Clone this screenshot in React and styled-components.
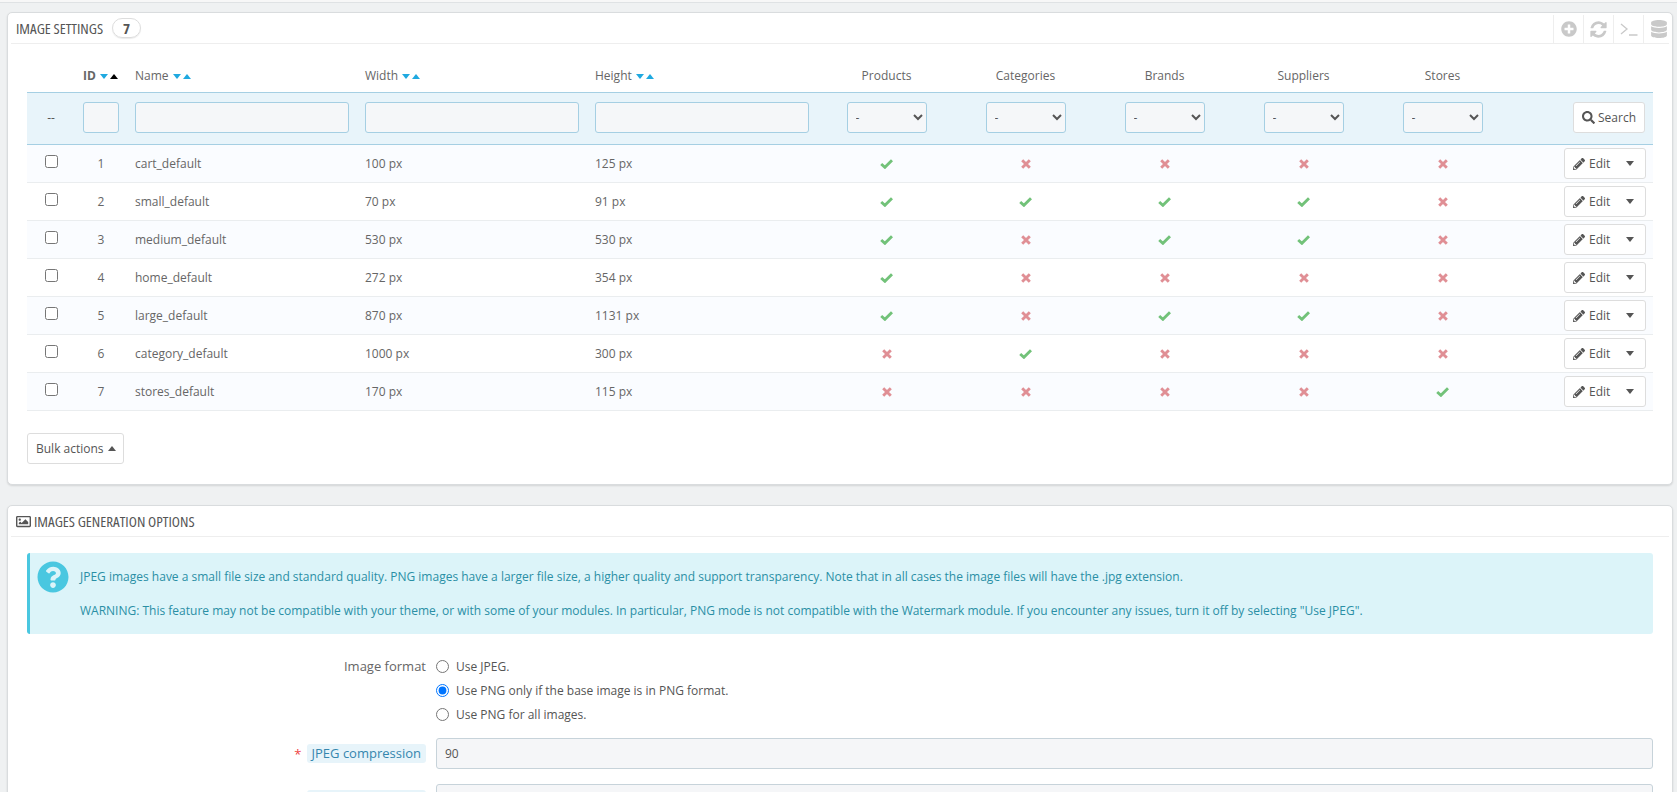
import styled, { createGlobalStyle } from "styled-components";
import { FaPencilAlt, FaSearch, FaPlusCircle, FaDatabase, FaRegImage, FaQuestionCircle } from "react-icons/fa";

const GlobalStyle = createGlobalStyle`
  html, body {
    margin: 0;
    height: 792px;
    overflow: hidden;
    background: #eff1f2;
  }
  body {
    font-family: "Open Sans", "Liberation Sans", sans-serif;
    font-size: 12px;
    color: #555;
  }
`;

const Page = styled.div`
  padding: 0 4px 0 7px;
`;

const TopEdge = styled.div`
  height: 2px;
  background: #f7f7f7;
  border-bottom: 1px solid #dfe2e4;
  margin: 0 -4px 9px -7px;
`;

const Panel = styled.section`
  background: #fff;
  border: 1px solid #d9dcde;
  border-radius: 5px;
  box-shadow: 0 1px 2px rgba(0, 0, 0, 0.12);
  padding: 0 3px;
  margin-bottom: 20px;
`;

const PanelHeader = styled.header`
  height: 30px;
  display: flex;
  align-items: center;
  border-bottom: 1px solid #eee;
  padding-left: 5px;
  font-size: 15px;
  font-stretch: 75%;
  text-transform: uppercase;
  color: #555;
  gap: 3px;
`;

const Badge = styled.span`
  box-sizing: border-box;
  border: 1px solid #ddd;
  border-radius: 10px;
  height: 20px;
  width: 29px;
  margin-left: 6px;
  display: flex;
  align-items: center;
  justify-content: center;
  font-weight: 700;
  font-size: 15px;
  box-shadow: 0 1px 1px rgba(0, 0, 0, 0.08);
`;

const Tools = styled.div`
  margin-left: auto;
  margin-right: -4px;
  display: flex;
  align-self: stretch;
`;

const Tool = styled.div`
  width: 30px;
  box-sizing: border-box;
  margin-top: 2px;
  display: flex;
  align-items: center;
  justify-content: center;
  border-left: 1px solid #eee;
  color: #c9c9c9;
  font-size: ${(p) => p.$size || 16}px;
`;

const Body = styled.div`
  padding: 0 16px;
`;

const Table = styled.table`
  width: 1626px;
  table-layout: fixed;
  border-collapse: collapse;
`;

const Th = styled.th`
  height: 33px;
  padding: 15px 8px 0;
  font-weight: ${(p) => (p.$active ? 700 : 400)};
  font-size: 12px;
  color: #666;
  text-align: ${(p) => (p.$center ? "center" : "left")};
  white-space: nowrap;
`;

const Carets = styled.span`
  display: inline-flex;
  align-items: center;
  gap: 2px;
  margin-left: 4px;
  vertical-align: 1px;
`;

const Caret = styled.i`
  display: inline-block;
  width: 0;
  height: 0;
  border-left: 4px solid transparent;
  border-right: 4px solid transparent;
  border-${(p) => (p.$up ? "bottom" : "top")}: 5px solid ${(p) => p.$color || "#1fa9e0"};
`;

const FilterRow = styled.tr`
  background: #e8f4fa;
  border-top: 1px solid #a5cfe3;
  border-bottom: 1px solid #a5cfe3;
`;

const FilterCell = styled.td`
  height: 48px;
  padding: 0 8px 3px;
  text-align: ${(p) => p.$align || "left"};
`;

const FilterInput = styled.input`
  display: block;
  box-sizing: border-box;
  width: 100%;
  height: 31px;
  background: #f5f7f9;
  border: 1px solid #a5cfe3;
  border-radius: 3px;
`;

const FilterSelect = styled.select`
  width: 80px;
  height: 31px;
  box-sizing: border-box;
  background: #f5f7f9;
  border: 1px solid #a5cfe3;
  border-radius: 3px;
  font-family: inherit;
  font-size: 12px;
  padding-left: 4px;
  color: #555;
  vertical-align: middle;
`;

const Row = styled.tr`
  background: ${(p) => (p.$odd ? "#fafcff" : "#fff")};
  border-bottom: 1px solid #eaedef;
`;

const Cell = styled.td`
  height: 37px;
  padding: 0 8px;
  text-align: ${(p) => p.$align || "left"};
  color: #666;
  font-size: 12px;
`;

const Check = styled.input`
  display: block;
  margin: -5px auto 0;
`;

const Mark = styled.svg`
  vertical-align: -1px;
  fill: none;
  stroke: ${(p) => p.$color};
  stroke-width: 2.9;
`;

const Yes = () => (
  <Mark $color="#72c279" width="13" height="10" viewBox="0 0 13 10">
    <path d="M1.2 5 L4.9 8.3 L12 1.3" />
  </Mark>
);

const No = () => (
  <Mark $color="#e08f95" width="10" height="10" viewBox="0 0 10 10">
    <path d="M1.2 1.2 L8.8 8.8 M8.8 1.2 L1.2 8.8" />
  </Mark>
);

const Button = styled.button`
  height: 31px;
  box-sizing: border-box;
  background: #fff;
  border: 1px solid #ddd;
  border-radius: 3px;
  font-family: inherit;
  font-size: 12px;
  color: #555;
  display: inline-flex;
  align-items: center;
  vertical-align: middle;
  white-space: nowrap;
  padding: 0 8px;
  gap: 3px;
`;

const EditButton = styled(Button)`
  width: 82px;
  margin-right: -1px;
  justify-content: space-between;
  padding: 0 11px 0 8px;
`;

const EditLabel = styled.span`
  display: inline-flex;
  align-items: center;
  gap: 4px;
`;

const BulkBar = styled.div`
  padding: 22px 0 20px;
`;

const BulkButton = styled(Button)`
  width: 97px;
  padding: 0 8px;
  gap: 4px;
`;

const Alert = styled.div`
  margin-top: 16px;
  height: 81px;
  box-sizing: border-box;
  background: #dcf4f9;
  border-left: 3px solid #4ac7e0;
  border-radius: 3px;
  color: #2a8fa5;
  padding: 15px 0 0 50px;
  position: relative;
  font-size: 12px;
  p {
    margin: 0;
    line-height: 17px;
  }
  p + p {
    margin-top: 17px;
  }
`;

const HelpIcon = styled(FaQuestionCircle)`
  position: absolute;
  left: 7px;
  top: 8px;
  font-size: 32px;
  color: #4ac7e0;
`;

const FormRow = styled.div`
  display: flex;
  gap: 10px;
  margin-top: ${(p) => p.$top || 0}px;
`;

const Label = styled.div`
  width: 399px;
  flex: none;
  display: flex;
  align-items: ${(p) => (p.$middle ? "center" : "flex-start")};
  justify-content: flex-end;
  gap: 5px;
  font-size: 13px;
  color: #666;
  line-height: 24px;
`;

const Hint = styled.span`
  background: #e7f4fa;
  color: #3586ae;
  border-radius: 3px;
  padding: 0 5px;
  line-height: 19px;
  font-size: 13px;
`;

const Star = styled.span`
  color: #e44;
  font-size: 13px;
`;

const Radios = styled.div`
  display: flex;
  flex-direction: column;
`;

const RadioLine = styled.label`
  height: 24px;
  display: flex;
  align-items: center;
  gap: 7px;
  color: #555;
  input {
    margin: 0;
    width: 13px;
    height: 13px;
  }
`;

const TextInput = styled.input`
  flex: 1;
  box-sizing: border-box;
  height: 31px;
  background: #f5f6f8;
  border: 1px solid #c7d3da;
  border-radius: 3px;
  padding: 0 8px;
  font-family: inherit;
  font-size: 12px;
  color: #555;
`;

const columns = [
  { id: "check", w: 48 },
  { id: "id", w: 52 },
  { id: "name", w: 230 },
  { id: "width", w: 230 },
  { id: "height", w: 230 },
  { id: "products", w: 139 },
  { id: "categories", w: 139 },
  { id: "brands", w: 139 },
  { id: "suppliers", w: 139 },
  { id: "stores", w: 139 },
  { id: "actions", w: 141 },
];

const images = [
  { id: 1, name: "cart_default", width: 100, height: 125, flags: [1, 0, 0, 0, 0] },
  { id: 2, name: "small_default", width: 70, height: 91, flags: [1, 1, 1, 1, 0] },
  { id: 3, name: "medium_default", width: 530, height: 530, flags: [1, 0, 1, 1, 0] },
  { id: 4, name: "home_default", width: 272, height: 354, flags: [1, 0, 0, 0, 0] },
  { id: 5, name: "large_default", width: 870, height: 1131, flags: [1, 0, 1, 1, 0] },
  { id: 6, name: "category_default", width: 1000, height: 300, flags: [0, 1, 0, 0, 0] },
  { id: 7, name: "stores_default", width: 170, height: 115, flags: [0, 0, 0, 0, 1] },
];

const kinds = ["Products", "Categories", "Brands", "Suppliers", "Stores"];

const SortCarets = ({ sorted }) => (
  <Carets>
    <Caret />
    <Caret $up $color={sorted ? "#000" : undefined} />
  </Carets>
);

const RefreshIcon = () => (
  <svg width="19" height="19" viewBox="0 0 1792 1792" fill="currentColor">
    <path d="M1639 1056q0 5-1 7-64 268-268 434.5t-478 166.5q-146 0-282.5-55t-243.5-157l-129 129q-19 19-45 19t-45-19-19-45v-448q0-26 19-45t45-19h448q26 0 45 19t19 45-19 45l-137 137q71 66 161 102t187 36q134 0 250-65t186-179q11-17 53-117 8-23 30-23h192q13 0 22.5 9.5t9.5 22.5zm25-800v448q0 26-19 45t-45 19h-448q-26 0-45-19t-19-45 19-45l138-138q-148-137-349-137-134 0-250 65t-186 179q-11 17-53 117-8 23-30 23h-199q-13 0-22.5-9.5t-9.5-22.5v-7q65-268 270-434.5t480-166.5q146 0 284 55.5t245 156.5l130-129q19-19 45-19t45 19 19 45z" />
  </svg>
);

const PromptIcon = () => (
  <svg width="18" height="14" viewBox="0 0 18 14" fill="none" stroke="currentColor" strokeWidth="1.3">
    <path d="M1 2 L7 7 L1 12 M9 13 H17.5" />
  </svg>
);

const App = () => {
  return (
    <Page>
      <GlobalStyle />
      <TopEdge />
      <Panel>
        <PanelHeader>
          Image settings <Badge>7</Badge>
          <Tools>
            <Tool>
              <FaPlusCircle />
            </Tool>
            <Tool>
              <RefreshIcon />
            </Tool>
            <Tool>
              <PromptIcon />
            </Tool>
            <Tool $size={18}>
              <FaDatabase />
            </Tool>
          </Tools>
        </PanelHeader>
        <Body>
          <Table>
            <colgroup>
              {columns.map((c) => (
                <col key={c.id} style={{ width: c.w }} />
              ))}
            </colgroup>
            <thead>
              <tr>
                <Th />
                <Th $active>
                  ID
                  <SortCarets sorted />
                </Th>
                <Th>
                  Name
                  <SortCarets />
                </Th>
                <Th>
                  Width
                  <SortCarets />
                </Th>
                <Th>
                  Height
                  <SortCarets />
                </Th>
                {kinds.map((k) => (
                  <Th key={k} $center>
                    {k}
                  </Th>
                ))}
                <Th />
              </tr>
              <FilterRow>
                <FilterCell $align="center">--</FilterCell>
                <FilterCell>
                  <FilterInput />
                </FilterCell>
                <FilterCell>
                  <FilterInput />
                </FilterCell>
                <FilterCell>
                  <FilterInput />
                </FilterCell>
                <FilterCell>
                  <FilterInput />
                </FilterCell>
                {kinds.map((k) => (
                  <FilterCell key={k} $align="center">
                    <FilterSelect defaultValue="-">
                      <option>-</option>
                    </FilterSelect>
                  </FilterCell>
                ))}
                <FilterCell $align="right">
                  <Button>
                    <FaSearch size={13} /> Search
                  </Button>
                </FilterCell>
              </FilterRow>
            </thead>
            <tbody>
              {images.map((img, i) => (
                <Row key={img.id} $odd={i % 2 === 0}>
                  <Cell>
                    <Check type="checkbox" />
                  </Cell>
                  <Cell $align="center">{img.id}</Cell>
                  <Cell>{img.name}</Cell>
                  <Cell>{img.width} px</Cell>
                  <Cell>{img.height} px</Cell>
                  {img.flags.map((f, j) => (
                    <Cell key={j} $align="center">
                      {f ? <Yes /> : <No />}
                    </Cell>
                  ))}
                  <Cell $align="right">
                    <EditButton>
                      <EditLabel>
                        <FaPencilAlt /> Edit
                      </EditLabel>
                      <Caret $color="#555" />
                    </EditButton>
                  </Cell>
                </Row>
              ))}
            </tbody>
          </Table>
          <BulkBar>
            <BulkButton>
              Bulk actions <Caret $up $color="#555" />
            </BulkButton>
          </BulkBar>
        </Body>
      </Panel>
      <Panel>
        <PanelHeader>
          <FaRegImage /> Images generation options
        </PanelHeader>
        <Body>
          <Alert>
            <HelpIcon />
            <p>
              JPEG images have a small file size and standard quality. PNG images have a larger file size, a higher
              quality and support transparency. Note that in all cases the image files will have the .jpg extension.
            </p>
            <p>
              WARNING: This feature may not be compatible with your theme, or with some of your modules. In particular,
              PNG mode is not compatible with the Watermark module. If you encounter any issues, turn it off by
              selecting "Use JPEG".
            </p>
          </Alert>
          <FormRow $top={20}>
            <Label>Image format</Label>
            <Radios>
              <RadioLine>
                <input type="radio" name="format" /> Use JPEG.
              </RadioLine>
              <RadioLine>
                <input type="radio" name="format" defaultChecked /> Use PNG only if the base image is in PNG format.
              </RadioLine>
              <RadioLine>
                <input type="radio" name="format" /> Use PNG for all images.
              </RadioLine>
            </Radios>
          </FormRow>
          <FormRow $top={12}>
            <Label $middle>
              <Star>*</Star>
              <Hint>JPEG compression</Hint>
            </Label>
            <TextInput defaultValue="90" />
          </FormRow>
          <FormRow $top={15}>
            <Label $middle>
              <Star>*</Star>
              <Hint>PNG compression</Hint>
            </Label>
            <TextInput />
          </FormRow>
        </Body>
      </Panel>
    </Page>
  );
};

export default App;
